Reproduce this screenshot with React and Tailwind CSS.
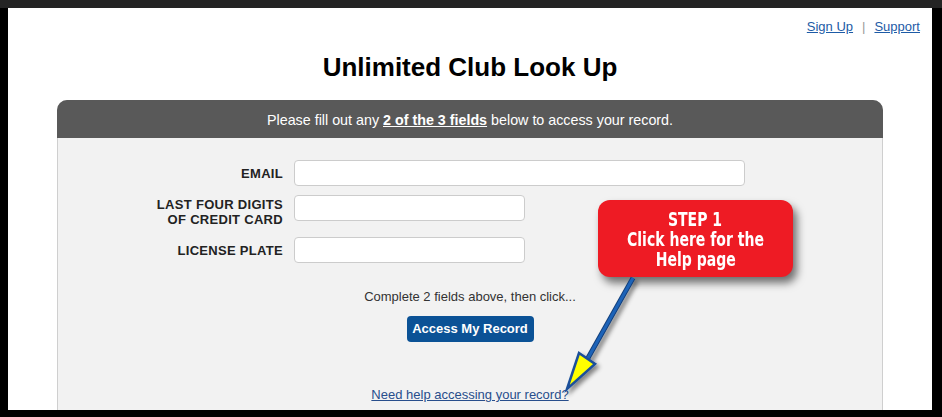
export default function App() {
  const f = { fontFamily: '"Liberation Sans", Arial, sans-serif' };
  return (
    <div className="relative w-[942px] h-[417px] overflow-hidden bg-black pl-[8px] pr-[10px] pb-[7px] border-t-[8px] border-t-[#242424]" style={f}>
      <div className="h-full bg-white overflow-hidden">
        <div className="flex justify-end items-center pt-[11px] pr-[12px] text-[13px] leading-[16px]">
          <a className="text-[#1d5ba6] underline" href="#">Sign Up</a>
          <span className="mx-[9px] text-[#999]">|</span>
          <a className="text-[#1d5ba6] underline" href="#">Support</a>
        </div>
        <h1 className="mt-[17px] text-center text-[26px] leading-[30px] font-bold text-black">Unlimited Club Look Up</h1>
        <div className="mx-[49px] mt-[18px] rounded-t-[10px] border border-[#cfcfcf] bg-[#f2f2f2] h-[400px]">
          <div className="h-[38px] -mx-px -mt-px pt-[3px] rounded-t-[10px] bg-[#595959] flex items-center justify-center text-white text-[14.3px]">
            <span>Please fill out any <b className="underline">2 of the 3 fields</b> below to access your record.</span>
          </div>
          <div className="pt-[22px]">
            <div className="flex items-center gap-[11px]">
              <div className="w-[225px] text-right font-bold text-[13px] leading-[15px] tracking-[0.3px] text-[#222]">EMAIL</div>
              <div className="w-[451px] h-[26px] rounded-[4px] border border-[#cccccc] bg-white" />
            </div>
            <div className="flex items-start gap-[11px] mt-[9px]">
              <div className="w-[225px] pt-[2px] text-right font-bold text-[13px] leading-[15px] tracking-[0.3px] text-[#222]">LAST FOUR DIGITS<br />OF CREDIT CARD</div>
              <div className="w-[231px] h-[26px] rounded-[4px] border border-[#cccccc] bg-white" />
            </div>
            <div className="flex items-center gap-[11px] mt-[10px]">
              <div className="w-[225px] text-right font-bold text-[13px] leading-[15px] tracking-[0.3px] text-[#222]">LICENSE PLATE</div>
              <div className="w-[231px] h-[26px] rounded-[4px] border border-[#cccccc] bg-white" />
            </div>
            <p className="mt-[26px] text-center text-[13px] leading-[16px] text-[#333]">Complete 2 fields above, then click...</p>
            <div className="mt-[11px] flex justify-center">
              <button className="w-[127px] h-[26px] rounded-[4px] bg-[#0b5296] text-white font-bold text-[13px]">Access My Record</button>
            </div>
            <div className="mt-[40px] text-center">
              <a href="#" className="text-[13px] leading-[16px] text-[#284e8c] underline">Need help accessing your record?</a>
            </div>
          </div>
        </div>
      </div>

      <div className="absolute left-[598px] top-[192px] w-[195px] h-[77px] rounded-[12px] bg-[#ee1b24] shadow-[4px_6px_8px_rgba(0,0,0,0.55)] flex flex-col items-center justify-center text-white font-bold text-[19px] leading-[20px] text-center" style={{ fontFamily: '"DejaVu Sans Condensed", "Liberation Sans", sans-serif' }}>
        <span className="scale-x-[0.82] whitespace-nowrap">STEP 1</span>
        <span className="scale-x-[0.82] whitespace-nowrap">Click here for the</span>
        <span className="scale-x-[0.82] whitespace-nowrap">Help page</span>
      </div>

      <svg className="absolute left-0 top-0 pointer-events-none" width="942" height="417" viewBox="0 0 942 417">
        <defs>
          <filter id="sh" x="-50%" y="-50%" width="200%" height="200%">
            <feDropShadow dx="3" dy="3" stdDeviation="2" floodColor="#000" floodOpacity="0.45" />
          </filter>
        </defs>
        <g filter="url(#sh)">
          <line x1="633" y1="270" x2="588" y2="350" stroke="#123e7a" strokeWidth="5" />
          <line x1="633" y1="270" x2="588" y2="350" stroke="#1e63b8" strokeWidth="3" />
          <polygon points="579,345 595,356 567,381" fill="#ffff00" stroke="#1a4f9a" strokeWidth="2.5" strokeLinejoin="miter" />
        </g>
      </svg>
    </div>
  );
}
